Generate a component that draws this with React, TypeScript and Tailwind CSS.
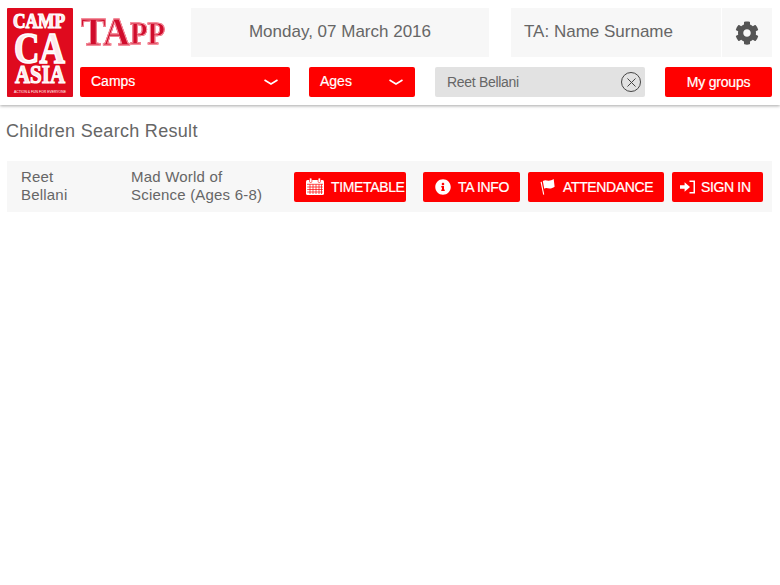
import { X } from "lucide-react";
import { FaCog, FaInfoCircle } from "react-icons/fa";

const sans = "font-['Liberation_Sans',Arial,sans-serif]";
const serif = "Liberation Serif, serif";

function CalendarIcon() {
  return (
    <svg width="18" height="17" viewBox="0 0 18 17" fill="#fff">
      <rect x="0" y="2" width="18" height="15" rx="1.5" />
      <rect x="3.5" y="0" width="2.4" height="4.5" rx="1" stroke="#ff0000" strokeWidth="0.6" />
      <rect x="12.1" y="0" width="2.4" height="4.5" rx="1" stroke="#ff0000" strokeWidth="0.6" />
      <g stroke="#ff0000" strokeWidth="0.7">
        <path d="M1 6.3h16M1.2 9h15.6M1.2 11.5h15.6M1.2 14h15.6" />
        <path d="M4 6.3v9.7M7 6.3v9.7M10 6.3v9.7M13 6.3v9.7M15.5 6.3v9.7" />
      </g>
    </svg>
  );
}

function FlagIcon() {
  return (
    <svg width="15" height="16" viewBox="0 0 16 17" fill="#fff">
      <path d="M0.6 3.2l1.2-.3 2.7 13.6-1.1.3z" />
      <path d="M3 2.2c2.5-1.9 4.4-.4 6.2-.5 2 0 3.6-.7 5.4-1.7l1 8.1c-1.8 1.2-3.4 1.9-5.3 2-2 .1-3.6-1.3-5.8.2z" />
    </svg>
  );
}

function SignInIcon() {
  return (
    <svg width="15" height="14" viewBox="0 0 15 14" fill="#fff">
      <path d="M0 5.2h4.6V2.2L10 7l-5.4 4.8v-3H0z" />
      <path d="M9.5 0.5H15v13H9.5v-1.5h4V2h-4z" />
    </svg>
  );
}

function Chevron() {
  return (
    <svg width="14" height="7" viewBox="0 0 14 7" fill="none" stroke="#fff" strokeWidth="1.6" className="mr-[1px] mt-[2px]">
      <path d="M0.5 1l6.5 4 6.5-4" />
    </svg>
  );
}

function SelectBox({ label, className }: { label: string; className: string }) {
  return (
    <div className={`flex h-[30px] items-center justify-between rounded-[2px] bg-[#ff0000] pb-[2px] pl-[11px] pr-[11px] text-[14px] text-white [-webkit-text-stroke:0.2px_#fff] ${className}`}>
      <span>{label}</span>
      <Chevron />
    </div>
  );
}

function ActionButton({ icon, label, className }: { icon: React.ReactNode; label: string; className: string }) {
  return (
    <button className={`flex h-[30px] items-center rounded-[2px] bg-[#ff0000] text-[14px] tracking-[-0.35px] text-white [-webkit-text-stroke:0.2px_#fff] ${className}`}>
      {icon}
      <span>{label}</span>
    </button>
  );
}

function Logo() {
  return (
    <svg width="66" height="89" viewBox="0 0 66 89" overflow="visible" className="shrink-0" fontFamily={serif} fontWeight="700">
      <rect width="66" height="89" rx="1" fill="#df0a1e" />
      <g fill="#fde8ea" stroke="#fff" strokeWidth="1.2">
        <text x="6" y="20" fontSize="20" textLength="52" lengthAdjust="spacingAndGlyphs">CAMP</text>
        <text x="7" y="55" fontSize="45" strokeWidth="1.6" textLength="51" lengthAdjust="spacingAndGlyphs">CA</text>
        <text x="8" y="75" fontSize="26" textLength="50" lengthAdjust="spacingAndGlyphs">ASIA</text>
      </g>
      <text x="7" y="85" fontSize="4" fill="#fff" fontWeight="400" fontFamily="Liberation Sans, sans-serif" textLength="52" lengthAdjust="spacingAndGlyphs">ACTION &amp; FUN FOR EVERYONE</text>
    </svg>
  );
}

function AppLogo() {
  return (
    <svg width="86" height="34" viewBox="0 0 86 34" overflow="visible" fontFamily={serif} fontWeight="700" fill="#d00c2c" stroke="#f29aa6" strokeWidth="1" className="mb-[1px] [filter:drop-shadow(0_0_0.7px_#f01030)]">
      <text x="1" y="30" fontSize="41" textLength="49" lengthAdjust="spacingAndGlyphs">TA</text>
      <text x="50" y="29" fontSize="31" textLength="35" lengthAdjust="spacingAndGlyphs">PP</text>
    </svg>
  );
}

export default function App() {
  return (
    <div className={`${sans} min-h-[585px] bg-white text-[#666]`}>
      <header className="flex h-[105px] gap-[7px] pl-[7px] pr-[8px] pt-[8px] shadow-[0_1px_3px_rgba(0,0,0,0.35)]">
        <Logo />
        <div className="flex flex-1 flex-col gap-[10px]">
          <div className="flex h-[49px]">
            <div className="flex w-[111px] items-center">
              <AppLogo />
            </div>
            <div className="flex w-[298px] items-center justify-center bg-[#f7f7f7] pb-[2px] text-[17px]">Monday, 07 March 2016</div>
            <div className="ml-[22px] flex w-[210px] items-center bg-[#f7f7f7] pb-[2px] pl-[13px] text-[17px]">TA: Name Surname</div>
            <div className="ml-px flex w-[50px] items-center justify-center bg-[#f7f7f7]">
              <FaCog size={24} color="#555" />
            </div>
          </div>
          <div className="flex h-[30px]">
            <SelectBox label="Camps" className="w-[210px]" />
            <SelectBox label="Ages" className="ml-[19px] w-[106px]" />
            <div className="ml-[20px] flex h-[30px] w-[210px] items-center justify-between rounded-[2px] bg-[#e2e2e2] pl-[12px] pr-[4px] text-[14px] tracking-[-0.3px]">
              <span>Reet Bellani</span>
              <span className="flex h-[20px] w-[20px] items-center justify-center rounded-full border-[1.5px] border-[#444] text-[#444]">
                <X size={15} strokeWidth={1.6} />
              </span>
            </div>
            <button className="ml-[20px] h-[30px] w-[107px] rounded-[2px] bg-[#ff0000] text-[14px] tracking-[-0.2px] text-white [-webkit-text-stroke:0.2px_#fff]">My groups</button>
          </div>
        </div>
      </header>
      <main className="pl-[7px] pr-[8px]">
        <h1 className="ml-[-1px] mt-[16px] text-[18px] leading-[21px] tracking-[0.3px]">Children Search Result</h1>
        <div className="mt-[19px] flex h-[51px] items-center bg-[#f7f7f7] pl-[14px] text-[15px] leading-[18px] tracking-[0.2px]">
          <div className="w-[110px] pb-[1px]">Reet<br />Bellani</div>
          <div className="w-[163px] pb-[1px]">Mad World of<br />Science (Ages 6-8)</div>
          <div className="flex">
            <ActionButton icon={<CalendarIcon />} label="TIMETABLE" className="w-[112px] gap-[7px] pl-[12px]" />
            <ActionButton icon={<FaInfoCircle size={16} />} label="TA INFO" className="ml-[17px] w-[97px] gap-[7px] pl-[12px]" />
            <ActionButton icon={<FlagIcon />} label="ATTENDANCE" className="ml-[8px] w-[136px] gap-[8px] pl-[12px]" />
            <ActionButton icon={<SignInIcon />} label="SIGN IN" className="ml-[8px] w-[91px] gap-[6px] pl-[8px]" />
          </div>
        </div>
      </main>
    </div>
  );
}
